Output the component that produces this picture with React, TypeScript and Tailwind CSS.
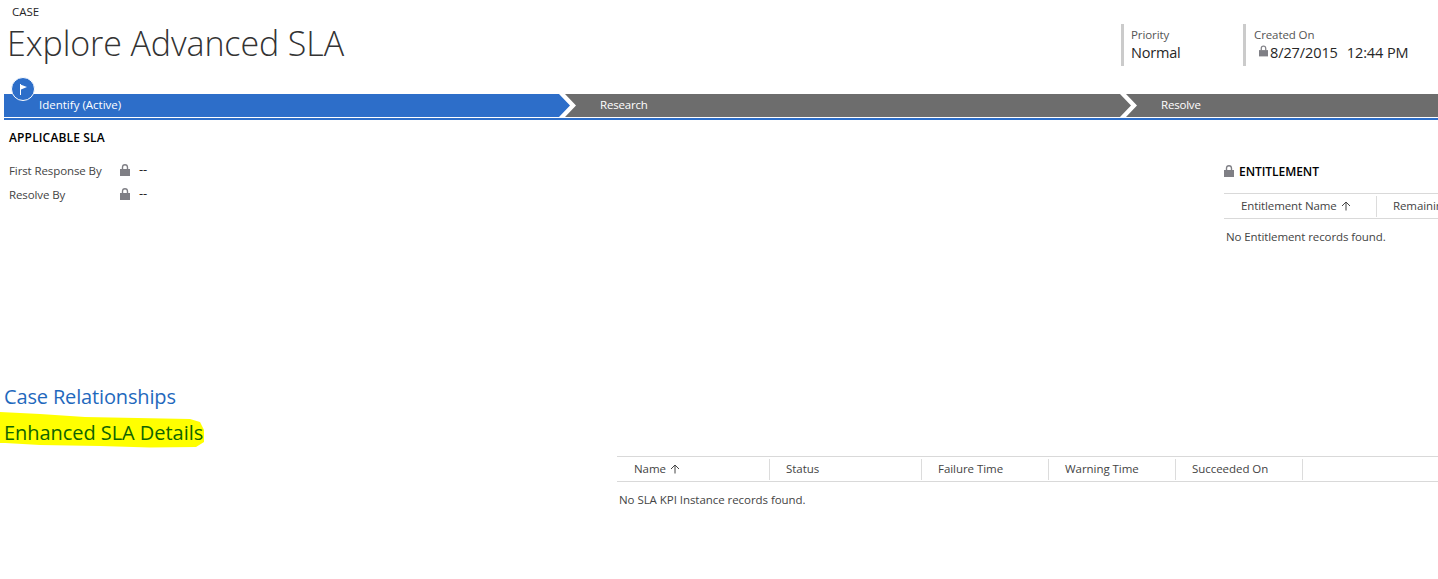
import React from "react";

const Lock = ({ className }: { className?: string }) => (
  <svg viewBox="0 0 10 12" className={className} fill="#7f7f85">
    <path d="M0 5h10v7H0z" />
    <path d="M1.8 5.5V3.4C1.8 1.2 3 0 5 0s3.2 1.2 3.2 3.4v2.1H6.8V3.4C6.8 2.1 6.2 1.4 5 1.4s-1.8.7-1.8 2v2.1z" />
  </svg>
);

const Up = () => (
  <svg viewBox="0 0 10 10" className="ml-[4px] h-[10px] w-[10px]" fill="none" stroke="#444" strokeWidth="1">
    <path d="M5 9.5V1M1 5l4-4 4 4" />
  </svg>
);

const Chevron = ({ left }: { left: string }) => (
  <svg viewBox="0 0 17 23" className="h-[23px] w-[17px] shrink-0" preserveAspectRatio="none">
    <path d="M0 0h17v23H0z" fill="#6d6d6d" />
    <path d="M0 0h1L12 11.5 1 23H0z" fill={left} />
    <path d="M0 0h6L17 11.5 6 23H0L11 11.5z" fill="#fff" />
  </svg>
);

const Head = ({ w, label, sort }: { w: string; label: string; sort?: boolean }) => (
  <div className={`flex h-[21px] shrink-0 items-center border-r border-[#dcdcdc] ${sort ? "pl-[17px]" : "pl-[16px]"} ${w}`}>
    <span>{label}</span>
    {sort && <Up />}
  </div>
);

export default function App() {
  return (
    <div className="relative h-[579px] w-[1438px] overflow-hidden bg-white font-['Open_Sans',sans-serif] text-[#444]">
      <header className="flex h-[94px] justify-between">
        <div>
          <div className="pl-[12px] pt-[4px] text-[11.5px] leading-[16px] text-[#262626]">CASE</div>
          <h1 className="pl-[7px] text-[34px] font-light leading-[46px] tracking-[-0.1px] text-[#333]">Explore Advanced SLA</h1>
        </div>
        <div className="flex pt-[24px]">
          <div className="h-[42px] w-[122px] border-l-[3px] border-[#cbcbcb] pl-[7px]">
            <div className="pt-[2px] text-[11.5px] leading-[17px] tracking-[-0.1px] text-[#555]">Priority</div>
            <div className="text-[14.5px] leading-[20px] tracking-[-0.2px] text-[#262626]">Normal</div>
          </div>
          <div className="h-[42px] w-[195px] border-l-[3px] border-[#cbcbcb] pl-[8px]">
            <div className="pt-[2px] text-[11.5px] leading-[17px] tracking-[-0.1px] text-[#555]">Created On</div>
            <div className="flex items-center pl-[5px] text-[14.5px] leading-[20px] tracking-[-0.1px] text-[#262626]">
              <Lock className="mb-[4px] mr-[2px] h-[12px] w-[9px]" />
              <span>8/27/2015</span>
              <span className="ml-[9px]">12:44 PM</span>
            </div>
          </div>
        </div>
      </header>

      <div className="relative pl-[4px]">
        <div className="absolute left-[11px] top-[-17px] flex h-[24px] w-[24px] items-center justify-center rounded-full border-[1.5px] border-white bg-[#2d6ec9]">
          <svg viewBox="0 0 10 11" className="h-[11px] w-[10px]" fill="#fff">
            <path d="M2 0h1v11H2z" />
            <path d="M3 .8l6 2.3-6 2.3z" />
          </svg>
        </div>
        <div className="flex h-[23px] text-[11.5px] leading-[22px] text-white">
          <div className="w-[555px] bg-[#2d6ec9] pl-[35px]">Identify (Active)</div>
          <Chevron left="#2d6ec9" />
          <div className="w-[544px] bg-[#6d6d6d] pl-[24px] tracking-[-0.2px]">Research</div>
          <Chevron left="#6d6d6d" />
          <div className="flex-1 bg-[#6d6d6d] pl-[24px] tracking-[-0.2px]">Resolve</div>
        </div>
        <div className="mt-[1px] h-[2px] bg-[#2d6ec9]" />
      </div>

      <div className="flex h-[261px] justify-between text-[11.5px] tracking-[-0.1px]">
        <section className="pl-[9px] pt-[10px]">
          <h2 className="text-[12px] font-semibold leading-[16px] tracking-[0.15px] text-black">APPLICABLE SLA</h2>
          <div className="mt-[13px] flex h-[24px] items-center">
            <span className="w-[111px]">First Response By</span>
            <Lock className="mb-[3px] h-[12px] w-[10px]" />
            <span className="mb-[2px] ml-[9px] text-[13px] text-[#262626]">--</span>
          </div>
          <div className="flex h-[24px] items-center">
            <span className="w-[111px]">Resolve By</span>
            <Lock className="mb-[3px] h-[12px] w-[10px]" />
            <span className="mb-[2px] ml-[9px] text-[13px] text-[#262626]">--</span>
          </div>
        </section>
        <section className="w-[214px] overflow-hidden pt-[44px]">
          <div className="flex h-[16px] items-center">
            <Lock className="mb-[2px] h-[12px] w-[10px]" />
            <h2 className="ml-[5px] text-[12px] font-semibold tracking-[-0.05px] text-black">ENTITLEMENT</h2>
          </div>
          <div className="mt-[13px] flex h-[26px] w-[300px] items-center border-y border-[#d9d9d9]">
            <Head w="w-[153px]" label="Entitlement Name" sort />
            <Head w="w-[120px] border-r-0" label="Remaining Terms" />
          </div>
          <div className="pl-[2px] pt-[9px] leading-[18px]">No Entitlement records found.</div>
        </section>
      </div>

      <div className="pl-[4px] text-[20px] leading-[32px] tracking-[-0.15px] text-[#1f69bd]">Case Relationships</div>
      <div className="relative mt-[4px] h-[32px] pl-[4px] text-[20px] leading-[32px] tracking-[-0.05px] text-[#0f6400]">
        <svg viewBox="0 0 204 36" className="absolute left-0 top-[-5px] h-[36px] w-[204px]" fill="#ffff00">
          <path d="M0 0L40 2 85 5 190 7 200 10 204 18 204 30 196 35 150 35.5 100 34 40 33 5 31 0 31z" />
        </svg>
        <span className="relative">Enhanced SLA Details</span>
      </div>

      <section className="ml-[617px] mt-[7px] text-[11.5px] tracking-[-0.05px]">
        <div className="flex h-[26px] items-center border-y border-[#d9d9d9]">
          <Head w="w-[153px]" label="Name" sort />
          <Head w="w-[152px]" label="Status" />
          <Head w="w-[127px]" label="Failure Time" />
          <Head w="w-[127px]" label="Warning Time" />
          <Head w="w-[127px]" label="Succeeded On" />
        </div>
        <div className="pl-[2px] pt-[9px] leading-[18px]">No SLA KPI Instance records found.</div>
      </section>
    </div>
  );
}
